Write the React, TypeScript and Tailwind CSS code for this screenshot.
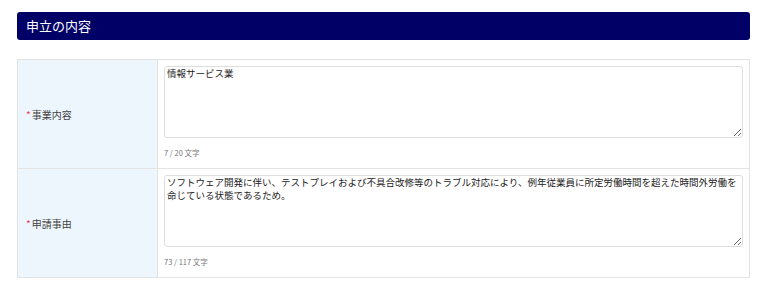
import React from 'react';

const font = { fontFamily: '"Noto Sans CJK JP", "Noto Sans", sans-serif' };

function Row({ label, value, max, last }: { label: string; value: string; max: number; last?: boolean }) {
  return (
    <div className={`flex ${last ? '' : 'border-b border-[#e3e3e3]'}`}>
      {/* Label */}
      <div className="w-[140px] shrink-0 bg-[#edf5fd] border-r border-[#e3e3e3] flex items-center pl-[8px] text-[10px] text-[#444]">
        <span className="text-[#e0474c] mr-[1px]">*</span>
        {label}
      </div>

      {/* Field */}
      <div className="flex-1 px-[6px] pt-[6px] pb-[10px]">
        <textarea
          readOnly
          defaultValue={value}
          className="block w-full h-[72px] border border-[#dedede] rounded-[3px] px-[2px] py-0 text-[9.5px] leading-[13px] text-[#222] outline-none resize-y"
          style={font}
        />
        <div className="mt-[10px] text-[7.5px] leading-[10px] text-[#777]">
          {value.length} / {max} 文字
        </div>
      </div>
    </div>
  );
}

export default function App() {
  return (
    <div className="w-[768px] h-[291px] bg-white px-[17px] pt-[12px] pr-[18px]" style={font}>
      <div className="h-[28px] bg-[#000066] rounded-[3px] flex items-center pl-[9px] text-[13px] text-white">
        申立の内容
      </div>

      <div className="mt-[19px] border border-[#e3e3e3]">
        <Row label="事業内容" value="情報サービス業" max={20} />
        <Row
          label="申請事由"
          value="ソフトウェア開発に伴い、テストプレイおよび不具合改修等のトラブル対応により、例年従業員に所定労働時間を超えた時間外労働を命じている状態であるため。"
          max={117}
          last
        />
      </div>
    </div>
  );
}
